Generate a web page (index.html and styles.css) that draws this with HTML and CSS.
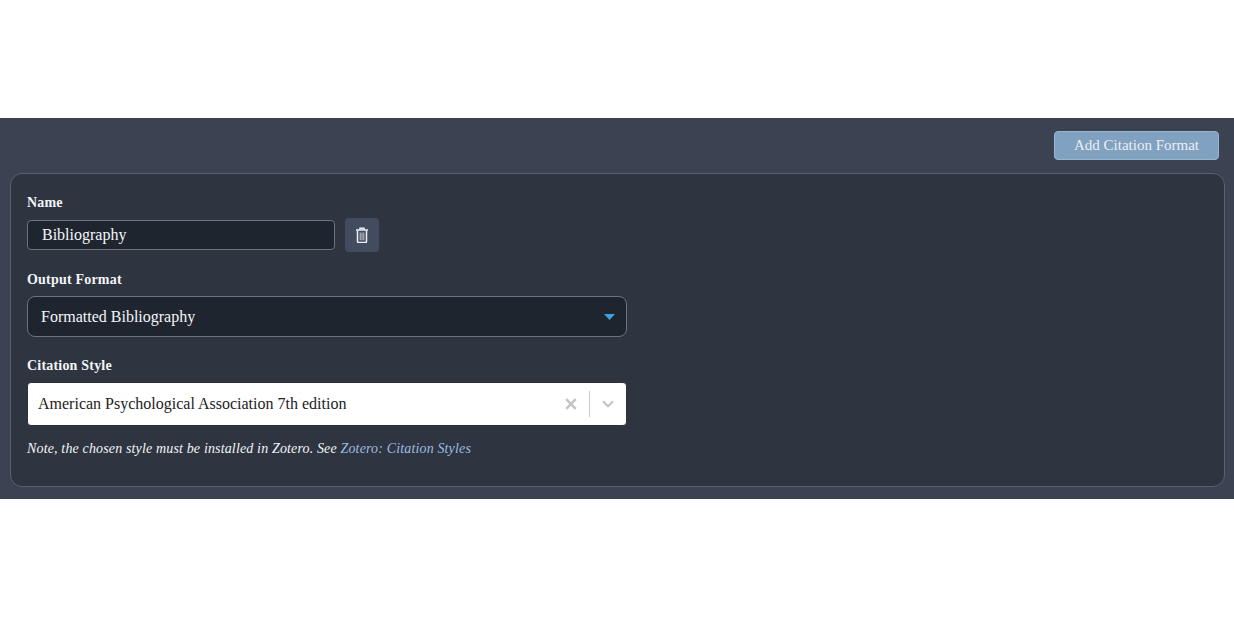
FILE: index.html
```html
<!DOCTYPE html>
<html lang="en">
<head>
<meta charset="utf-8">
<title>Citation Formats</title>
<link rel="stylesheet" href="styles.css">
</head>
<body>
<main class="panel">
  <div class="toolbar">
    <button class="add-btn" type="button">Add Citation Format</button>
  </div>
  <section class="card">
    <label class="label label-name">Name</label>
    <div class="name-row">
      <input class="name-input" type="text" value="Bibliography">
      <button class="trash-btn" type="button" aria-label="Delete">
        <svg width="14" height="16" viewBox="0 0 14 16" fill="none" stroke="#eceff4" stroke-width="1.5">
          <path d="M1 3h12"/>
          <path d="M5 2.8V1.2h4v1.6"/>
          <path d="M2.5 3.4v11.2a.8.8 0 0 0 .8.8h7.4a.8.8 0 0 0 .8-.8V3.4"/>
          <path d="M5.2 5.5v7.8M7 5.5v7.8M8.8 5.5v7.8" stroke-width="1" stroke="#c4c9d4"/>
        </svg>
      </button>
    </div>
    <label class="label label-output">Output Format</label>
    <div class="select">
      <span>Formatted Bibliography</span>
      <svg class="caret" width="11" height="6" viewBox="0 0 11 6"><path d="M0 0h11L5.5 6z" fill="#3fa2de"/></svg>
    </div>
    <label class="label label-style">Citation Style</label>
    <div class="combo">
      <span class="combo-value">American Psychological Association 7th edition</span>
      <div class="combo-icons">
        <svg class="combo-x" width="12" height="12" viewBox="0 0 12 12" fill="none" stroke="#c4c4c4" stroke-width="2.4"><path d="M1.2 1.2l9.6 9.6M10.8 1.2l-9.6 9.6"/></svg>
        <span class="combo-sep"></span>
        <svg class="combo-chev" width="12" height="8" viewBox="0 0 12 8" fill="none" stroke="#c4c4c4" stroke-width="2.2"><path d="M1 1.2l5 5 5-5"/></svg>
      </div>
    </div>
    <p class="note">Note, the chosen style must be installed in Zotero. See <a href="#">Zotero: Citation Styles</a></p>
  </section>
</main>
</body>
</html>
```
FILE: styles.css
```css
* { box-sizing: border-box; }
html, body { margin: 0; background: #fff; }
body {
  font-family: "Liberation Serif", "Times New Roman", serif;
  padding-top: 118px;
  height: 617px;
  overflow: hidden;
}
.panel {
  background: #3b4252;
  height: 381px;
  padding: 13px 9px 12px 10px;
  color: #eceff4;
}
.toolbar { display: flex; justify-content: flex-end; padding-right: 6px; }
.add-btn {
  width: 165px;
  height: 29px;
  background: #81a1c1;
  color: #eceff4;
  border: 1px solid #9ab5d0;
  border-radius: 4px;
  font: 15px "Liberation Serif", serif;
  padding: 0;
}
.card {
  margin-top: 13px;
  height: 314px;
  background: #2e3440;
  border: 1px solid #596273;
  border-radius: 12px;
  padding: 21px 16px 0;
  display: flex;
  flex-direction: column;
  align-items: flex-start;
}
.label {
  font-size: 14px;
  font-weight: bold;
  line-height: 16px;
  letter-spacing: 0.2px;
  color: #f4f6f9;
}
.name-row { display: flex; align-items: center; gap: 10px; margin-top: 7px; }
.name-input {
  width: 308px;
  height: 30px;
  background: #1f252f;
  border: 1px solid #6b7382;
  border-radius: 4px;
  color: #f4f6f9;
  font: 16px "Liberation Serif", serif;
  padding: 0 14px;
  outline: none;
}
.trash-btn {
  width: 34px;
  height: 34px;
  background: #434c5e;
  border: none;
  border-radius: 4px;
  padding: 0;
  display: flex;
  align-items: center;
  justify-content: center;
}
.label-output { margin-top: 20px; }
.select {
  margin-top: 8px;
  width: 600px;
  height: 41px;
  background: #1f252f;
  border: 1px solid #6b7382;
  border-radius: 8px;
  display: flex;
  align-items: center;
  justify-content: space-between;
  padding: 0 11px 0 13px;
  font-size: 16px;
  color: #f4f6f9;
}
.label-style { margin-top: 21px; }
.combo {
  margin-top: 8px;
  width: 600px;
  height: 44px;
  background: #fff;
  border: 1px solid #2b3039;
  border-radius: 4px;
  display: flex;
  align-items: center;
  justify-content: space-between;
  padding-left: 10px;
  color: #222;
  font-size: 16px;
}
.combo-icons { display: flex; align-items: center; }
.combo-x { margin-right: 12px; }
.combo-sep { width: 1px; height: 26px; background: #ccc; }
.combo-chev { margin: 0 12px; }
.note {
  margin: 15px 0 0;
  font-size: 14px;
  font-style: italic;
  line-height: 16px;
  letter-spacing: 0.15px;
  color: #f4f6f9;
}
.note a { color: #9dbde0; text-decoration: none; }
```
